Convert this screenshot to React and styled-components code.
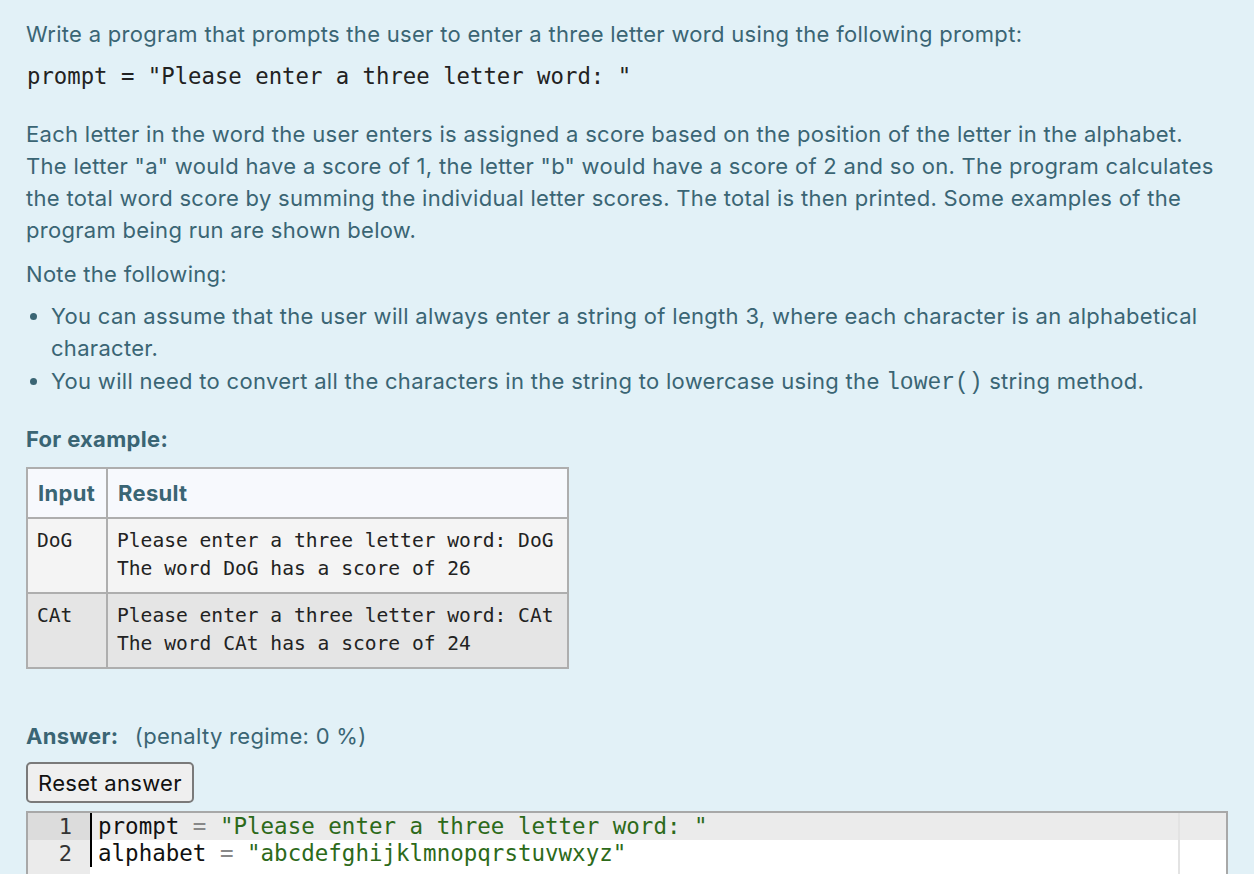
import React from "react";
import styled, { createGlobalStyle } from "styled-components";

const Global = createGlobalStyle`
  html, body { margin: 0; padding: 0; background: #e2f1f7; }
  body { font-family: Inter, "Open Sans", sans-serif; }
`;

const Page = styled.div`
  padding: 18px 26px 0 26px;
  color: #3a6574;
  font-size: 22px;
  letter-spacing: 0.3px;
  line-height: 32px;
`;

const P = styled.p`
  margin: 0 0 ${(p) => p.$mb || 10}px 0;
`;

const CodeLine = styled.pre`
  margin: 0 0 ${(p) => p.$mb || 20}px 1px;
  font-family: "DejaVu Sans Mono", monospace;
  font-size: 22.3px;
  letter-spacing: 0;
  line-height: 32px;
  color: #222;
`;

const List = styled.ul`
  margin: 9px 0 24px 0;
  padding: 0 0 0 25px;
`;

const Item = styled.li`
  margin-bottom: 1px;
`;

const InlineCode = styled.code`
  font-family: "Liberation Mono", monospace;
  font-size: 23px;
  letter-spacing: 0;
  color: #3a6574;
`;

const Heading = styled.div`
  font-weight: 700;
  margin: ${(p) => p.$mt || 0}px 0 ${(p) => p.$mb || 0}px 0;
`;

const Table = styled.table`
  border-collapse: collapse;
  border: 2px solid #aeaeae;
  margin-bottom: 51px;
`;

const Th = styled.th`
  text-align: left;
  padding: 8px 11px 8px 10px;
  height: 32px;
  background: #f7f9fd;
  border: 2px solid #aeaeae;
  color: #3a6574;
  font-weight: 700;
`;

const Td = styled.td`
  vertical-align: top;
  padding: 8px 14px 9px 9px;
  background: ${(p) => (p.$alt ? "#e5e5e5" : "#f4f4f4")};
  border: 2px solid #aeaeae;
`;

const Mono = styled.pre`
  margin: 0;
  font-family: "DejaVu Sans Mono", monospace;
  font-size: 19.6px;
  letter-spacing: 0;
  line-height: 28px;
  color: #222;
`;

const Answer = styled.div`
  margin-bottom: 10px;
  line-height: 32px;
`;

const Bold = styled.span`
  font-weight: 700;
  margin-right: 10px;
`;

const Button = styled.button`
  font-family: Inter, "Open Sans", sans-serif;
  font-size: 22px;
  letter-spacing: 0.3px;
  color: #111;
  background: #efefef;
  border: 2px solid #7a7a7a;
  border-radius: 5px;
  padding: 0 10px;
  height: 41px;
  margin-bottom: 8px;
`;

const Editor = styled.div`
  width: 1198px;
  border: 2px solid #a8a8a8;
  border-bottom: none;
  display: flex;
  background: #fff;
  height: 62px;
`;

const Gutter = styled.div`
  width: 62px;
  background: #ebebeb;
  font-family: "DejaVu Sans Mono", monospace;
  font-size: 22px;
  letter-spacing: 0;
  line-height: 27px;
  color: #333;
  text-align: right;
`;

const GutterLine = styled.div`
  padding-right: 18px;
  background: ${(p) => (p.$active ? "#dcdcdc" : "transparent")};
`;

const Content = styled.div`
  flex: 1;
  position: relative;
  border-left: 2px solid #000;
  font-family: "DejaVu Sans Mono", monospace;
  font-size: 22.5px;
  letter-spacing: 0;
  line-height: 27px;
  height: 54px;
`;

const Line = styled.div`
  padding-left: 6px;
  white-space: pre;
  color: #111;
  background: ${(p) => (p.$active ? "#ebebeb" : "transparent")};
`;

const PrintMargin = styled.div`
  position: absolute;
  top: 0;
  bottom: -10px;
  left: 1086px;
  width: 2px;
  background: #e3e3e3;
`;

const Op = styled.span`
  color: #888;
`;
const Str = styled.span`
  color: #2d6a1a;
`;

export default function App() {
  return (
    <>
      <Global />
      <Page>
        <P $mb={10}>Write a program that prompts the user to enter a three letter word using the following prompt:</P>
        <CodeLine $mb={26}>prompt = "Please enter a three letter word: "</CodeLine>
        <P $mb={12}>
          Each letter in the word the user enters is assigned a score based on the position of the letter in the alphabet.
          The letter "a" would have a score of 1, the letter "b" would have a score of 2 and so on. The program calculates
          the total word score by summing the individual letter scores. The total is then printed. Some examples of the
          program being run are shown below.
        </P>
        <P $mb={0}>Note the following:</P>
        <List>
          <Item>
            You can assume that the user will always enter a string of length 3, where each character is an alphabetical
            character.
          </Item>
          <Item>
            You will need to convert all the characters in the string to lowercase using the <InlineCode>lower()</InlineCode> string method.
          </Item>
        </List>
        <Heading $mb={12}>For example:</Heading>
        <Table>
          <thead>
            <tr>
              <Th>Input</Th>
              <Th>Result</Th>
            </tr>
          </thead>
          <tbody>
            <tr>
              <Td>
                <Mono>DoG</Mono>
              </Td>
              <Td>
                <Mono>{"Please enter a three letter word: DoG\nThe word DoG has a score of 26"}</Mono>
              </Td>
            </tr>
            <tr>
              <Td $alt>
                <Mono>CAt</Mono>
              </Td>
              <Td $alt>
                <Mono>{"Please enter a three letter word: CAt\nThe word CAt has a score of 24"}</Mono>
              </Td>
            </tr>
          </tbody>
        </Table>
        <Answer>
          <Bold>Answer:</Bold> (penalty regime: 0 %)
        </Answer>
        <Button>Reset answer</Button>
        <Editor>
          <Gutter>
            <GutterLine $active>1</GutterLine>
            <GutterLine>2</GutterLine>
          </Gutter>
          <Content>
            <Line $active>
              prompt <Op>=</Op> <Str>"Please enter a three letter word: "</Str>
            </Line>
            <Line>
              alphabet <Op>=</Op> <Str>"abcdefghijklmnopqrstuvwxyz"</Str>
            </Line>
            <PrintMargin />
          </Content>
        </Editor>
      </Page>
    </>
  );
}
